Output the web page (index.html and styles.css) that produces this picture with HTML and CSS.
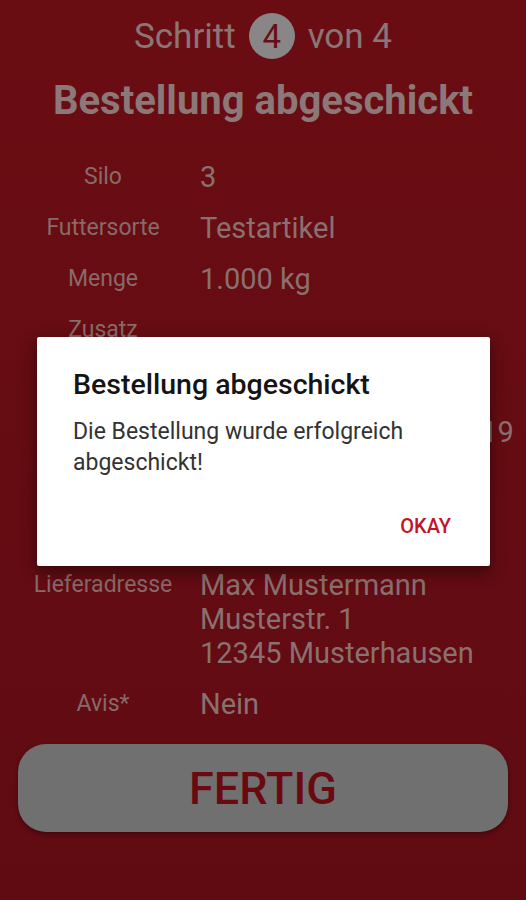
FILE: index.html
```html
<!DOCTYPE html>
<html lang="de">
<head>
<meta charset="utf-8">
<title>Bestellung abgeschickt</title>
<link rel="stylesheet" href="styles.css">
</head>
<body>
<main class="screen">
  <div class="step">
    <span>Schritt</span>
    <span class="step-num">4</span>
    <span>von 4</span>
  </div>
  <h1 class="title">Bestellung abgeschickt</h1>

  <dl class="summary">
    <div class="row"><dt>Silo</dt><dd>3</dd></div>
    <div class="row"><dt>Futtersorte</dt><dd>Testartikel</dd></div>
    <div class="row"><dt>Menge</dt><dd>1.000 kg</dd></div>
    <div class="row"><dt>Zusatz</dt><dd></dd></div>
    <div class="row"><dt>Lieferart</dt><dd>Lose</dd></div>
    <div class="row"><dt>Liefertermin</dt><dd>11.03.2019 - 15.03.2019</dd></div>
    <div class="row"><dt>Uhrzeit</dt><dd>vormittags</dd></div>
    <div class="row"><dt>Entladestelle</dt><dd>Hof</dd></div>
    <div class="row"><dt>Lieferadresse</dt><dd>Max Mustermann<br>Musterstr. 1<br>12345 Musterhausen</dd></div>
    <div class="row"><dt>Avis*</dt><dd>Nein</dd></div>
  </dl>

  <button class="done" type="button">FERTIG</button>

  <div class="dialog" role="dialog">
    <h2 class="dialog-title">Bestellung abgeschickt</h2>
    <p class="dialog-text">Die Bestellung wurde erfolgreich abgeschickt!</p>
    <div class="dialog-actions"><button class="dialog-btn" type="button">OKAY</button></div>
  </div>
</main>
</body>
</html>
```

FILE: styles.css
```css
* { box-sizing: border-box; }

html, body {
  margin: 0;
  padding: 0;
}

body {
  background: #640c12;
  font-family: Roboto, "Noto Sans", "Liberation Sans", sans-serif;
}

.screen {
  position: relative;
  width: 526px;
  height: 900px;
  padding-top: 13px;
  background: linear-gradient(#6a0d13, #600b12);
}

.step {
  display: flex;
  justify-content: center;
  align-items: center;
  gap: 13px;
  height: 46px;
  font-size: 35px;
  color: #8a7676;
}

.step-num {
  display: flex;
  align-items: center;
  justify-content: center;
  width: 46px;
  height: 46px;
  border-radius: 50%;
  background: #888686;
  color: #6b0d15;
  font-size: 33px;
}

.title {
  margin: 19px 0 0;
  height: 46px;
  line-height: 46px;
  text-align: center;
  font-size: 40px;
  font-weight: 700;
  color: #8c7878;
}

.summary {
  margin: 27px 0 0;
  padding: 0;
}

.row {
  display: grid;
  grid-template-columns: 140px 1fr;
  column-gap: 27px;
  padding: 8.5px 0 8.5px 33px;
  line-height: 34px;
  align-items: start;
}

.row dt {
  text-align: center;
  font-size: 23px;
  color: #876a6a;
  white-space: nowrap;
}

.row dd {
  margin: 0;
  font-size: 29px;
  color: #8a7070;
  white-space: nowrap;
}

.done {
  display: block;
  width: 490px;
  height: 88px;
  margin: 15px 0 0 18px;
  border: none;
  border-radius: 28px;
  background: #717070;
  color: #6a0a10;
  font-family: Roboto, "Noto Sans", sans-serif;
  font-size: 45px;
  font-weight: 500;
  box-shadow: 0 2px 4px rgba(0,0,0,0.35);
}

.dialog {
  position: absolute;
  left: 37px;
  top: 337px;
  width: 453px;
  height: 229px;
  background: #ffffff;
  border-radius: 2px;
  box-shadow: 0 6px 16px rgba(0,0,0,0.45);
  padding: 32px 36px 0 36px;
}

.dialog-title {
  margin: 0;
  font-size: 28.5px;
  font-weight: 500;
  line-height: 32px;
  color: #141414;
}

.dialog-text {
  margin: 15px 0 0;
  font-size: 23px;
  line-height: 31px;
  color: #333333;
}

.dialog-actions {
  display: flex;
  justify-content: flex-end;
  margin-top: 36px;
  margin-right: 3px;
}

.dialog-btn {
  border: none;
  background: none;
  padding: 0;
  font-family: Roboto, "Noto Sans", sans-serif;
  font-size: 20px;
  font-weight: 500;
  line-height: 24px;
  color: #c5122b;
}
```
